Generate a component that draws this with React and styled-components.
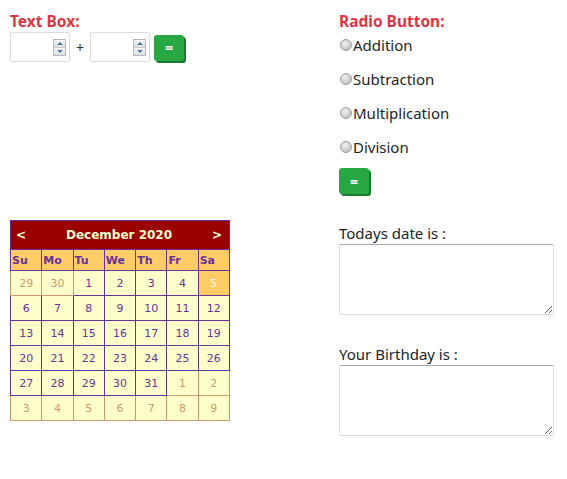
import React, { useState } from 'react';
import styled, { createGlobalStyle } from 'styled-components';

const GlobalStyle = createGlobalStyle`
  body {
    margin: 0;
    background: #fff;
    font-family: 'Noto Sans', 'Open Sans', sans-serif;
    color: #212529;
  }
`;

const Page = styled.div`
  display: grid;
  grid-template-columns: 329px 215px;
  row-gap: 26px;
  padding: 10px;
`;

const Section = styled.div`
  display: flex;
  flex-direction: column;
`;

const Title = styled.div`
  color: #dc3545;
  font-weight: bold;
  font-size: 15.5px;
  line-height: 22px;
`;

const InputRow = styled.div`
  display: flex;
  align-items: center;
`;

const NumberBox = styled.div`
  position: relative;
  width: 60px;
  height: 30px;
  box-sizing: border-box;
  border: 1px solid #dcdcdc;
  border-radius: 2px;
  background: #fff;

  input {
    border: none;
    outline: none;
    width: 38px;
    height: 26px;
    padding: 1px 4px;
    font: inherit;
  }
`;

const Spinner = styled.div`
  position: absolute;
  right: 3px;
  top: 6px;
  width: 13px;
  height: 17px;
  display: flex;
  flex-direction: column;
  border: 1px solid #b8b8c0;
  box-sizing: border-box;
`;

const SpinHalf = styled.div`
  flex: 1;
  background: linear-gradient(#f4f4f6, #dcdce4);
  display: flex;
  align-items: center;
  justify-content: center;
  border-top: ${(p) => (p.down ? '1px solid #c8c8d0' : 'none')};

  &::after {
    content: '';
    border-left: 3px solid transparent;
    border-right: 3px solid transparent;
    ${(p) => (p.down ? 'border-top: 3px solid #5a6ea8;' : 'border-bottom: 3px solid #5a6ea8;')}
  }
`;

const Plus = styled.span`
  font-size: 14px;
  color: #333;
  width: 8px;
  margin: 0 6px;
  text-align: center;
`;

const EqualsButton = styled.button`
  width: 30px;
  height: 26px;
  border: none;
  border-radius: 3px;
  background: #28a745;
  box-shadow: 2px 2px 0 #1a7a30;
  color: #fff;
  font-weight: bold;
  font-size: 14px;
  font-family: 'Noto Sans', sans-serif;
  cursor: pointer;
  padding: 0;
  margin-top: ${(p) => p.top || 0}px;
  margin-left: ${(p) => p.left || 0}px;
`;

const RadioList = styled.div`
  display: flex;
  flex-direction: column;
  gap: 12px;
  margin-top: 2px;
`;

const RadioLabel = styled.label`
  display: flex;
  align-items: center;
  font-size: 15px;
  line-height: 22px;
  color: #212529;

  input {
    appearance: none;
    margin: 0 1px 0 1px;
    width: 12px;
    height: 12px;
    border-radius: 50%;
    border: 1px solid #a0a0a0;
    background: radial-gradient(circle at 40% 35%, #f2f2f2, #c4c4c4 70%);
  }
  input:checked {
    background: radial-gradient(circle, #333 30%, #e0e0e0 35%);
  }
`;

const Calendar = styled.table`
  width: 220px;
  table-layout: fixed;
  border-collapse: collapse;
  border: 1px solid #663399;
  font-family: Verdana, 'DejaVu Sans', sans-serif;
  background: #ffffcc;
`;

const HeadRow = styled.tr`
  background: #990000;
  color: #ffffcc;
  font-weight: bold;
  font-size: 12px;
  height: 29px;
`;

const HeadBar = styled.div`
  display: flex;
  justify-content: space-between;
  align-items: center;
  padding: 0 6px 0 4px;
`;

const DayName = styled.th`
  background: #ffcc66;
  color: #663399;
  font-size: 11px;
  font-weight: bold;
  text-align: left;
  padding: 0 1px;
  height: 20px;
  border: 1px solid #663399;
`;

const Day = styled.td`
  height: 24px;
  text-align: center;
  font-size: 11px;
  color: ${(p) => (p.selected ? '#ffffff' : p.other ? '#cc9966' : '#663399')};
  background: ${(p) => (p.selected ? '#ffcc66' : '#ffffcc')};
  border: 1px solid ${(p) => (p.other ? '#cc9966' : '#663399')};
  padding: 0;
`;

const FieldLabel = styled.div`
  font-size: 15px;
  line-height: 20px;
  color: #212529;
  margin-top: 3px;
`;

const TextArea = styled.textarea`
  width: 215px;
  height: 71px;
  box-sizing: border-box;
  border: 1px solid #dcdcdc;
  border-top-color: #a8a8a8;
  border-radius: 2px;
  margin: 1px 0 0;
  margin-bottom: ${(p) => p.gap || 0}px;
`;

const weeks = [
  [[29, 1], [30, 1], [1], [2], [3], [4], [5, 0, 1]],
  [[6], [7], [8], [9], [10], [11], [12]],
  [[13], [14], [15], [16], [17], [18], [19]],
  [[20], [21], [22], [23], [24], [25], [26]],
  [[27], [28], [29], [30], [31], [1, 1], [2, 1]],
  [[3, 1], [4, 1], [5, 1], [6, 1], [7, 1], [8, 1], [9, 1]],
];

const NumberInput = () => (
  <NumberBox>
    <input type="text" />
    <Spinner>
      <SpinHalf />
      <SpinHalf down />
    </Spinner>
  </NumberBox>
);

export default function App() {
  const [op, setOp] = useState('');
  const ops = ['Addition', 'Subtraction', 'Multiplication', 'Division'];

  return (
    <>
      <GlobalStyle />
      <Page>
        <Section>
          <Title>Text Box:</Title>
          <InputRow>
            <NumberInput />
            <Plus>+</Plus>
            <NumberInput />
            <EqualsButton top={1} left={4}>=</EqualsButton>
          </InputRow>
        </Section>

        <Section>
          <Title>Radio Button:</Title>
          <RadioList>
            {ops.map((o) => (
              <RadioLabel key={o}>
                <input type="radio" name="op" checked={op === o} onChange={() => setOp(o)} />
                {o}
              </RadioLabel>
            ))}
          </RadioList>
          <div style={{ marginTop: 10 }}>
            <EqualsButton>=</EqualsButton>
          </div>
        </Section>

        <Section>
          <Calendar>
            <thead>
              <HeadRow>
                <td colSpan={7}>
                  <HeadBar>
                    <span>&lt;</span>
                    <span>December 2020</span>
                    <span>&gt;</span>
                  </HeadBar>
                </td>
              </HeadRow>
              <tr>
                {['Su', 'Mo', 'Tu', 'We', 'Th', 'Fr', 'Sa'].map((d) => (
                  <DayName key={d}>{d}</DayName>
                ))}
              </tr>
            </thead>
            <tbody>
              {weeks.map((w, i) => (
                <tr key={i}>
                  {w.map(([n, other, sel], j) => (
                    <Day key={j} other={other} selected={sel}>
                      {n}
                    </Day>
                  ))}
                </tr>
              ))}
            </tbody>
          </Calendar>
        </Section>

        <Section>
          <FieldLabel>Todays date is :</FieldLabel>
          <TextArea gap={26} />
          <FieldLabel>Your Birthday is :</FieldLabel>
          <TextArea />
        </Section>
      </Page>
    </>
  );
}
